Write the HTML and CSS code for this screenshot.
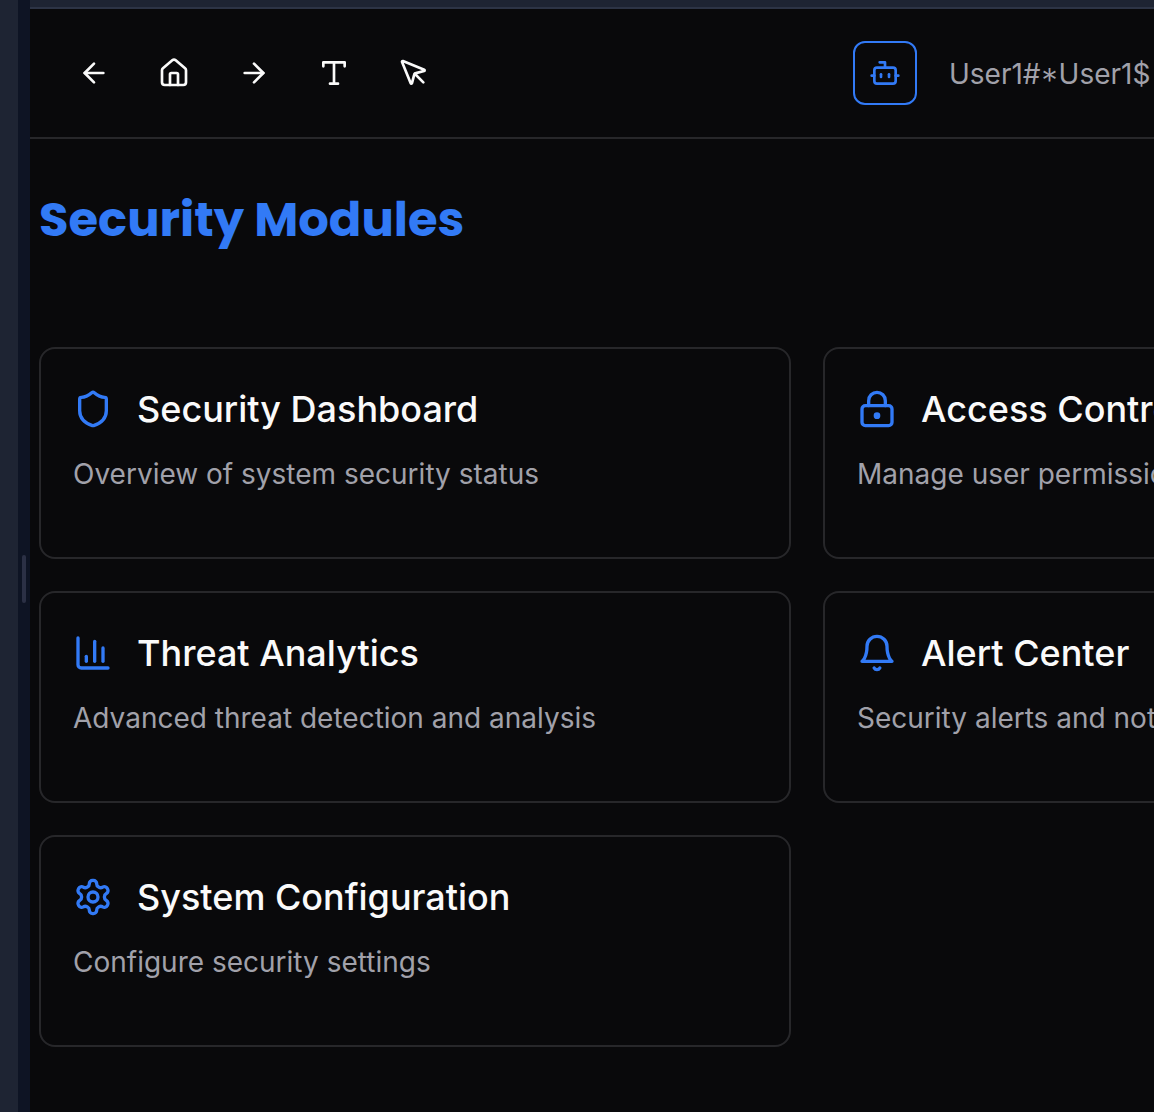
FILE: index.html
```html
<!DOCTYPE html>
<html lang="en">
<head>
<meta charset="utf-8">
<title>Security Modules</title>
<link rel="stylesheet" href="styles.css">
</head>
<body>
<div class="app">
  <aside class="sidebar"></aside>
  <div class="resizer"><span class="resizer-grip"></span></div>
  <div class="panel">
    <div class="panel-top"></div>
    <header class="toolbar">
      <nav class="tools">
        <svg class="icon" viewBox="0 0 24 24"><path d="m12 19-7-7 7-7"/><path d="M19 12H5"/></svg>
        <svg class="icon" viewBox="0 0 24 24"><path d="M15 21v-8a1 1 0 0 0-1-1h-4a1 1 0 0 0-1 1v8"/><path d="M3 10a2 2 0 0 1 .709-1.528l7-5.999a2 2 0 0 1 2.582 0l7 5.999A2 2 0 0 1 21 10v9a2 2 0 0 1-2 2H5a2 2 0 0 1-2-2z"/></svg>
        <svg class="icon" viewBox="0 0 24 24"><path d="M5 12h14"/><path d="m12 5 7 7-7 7"/></svg>
        <svg class="icon" viewBox="0 0 24 24"><path d="M4 7V4h16v3"/><path d="M9 20h6"/><path d="M12 4v16"/></svg>
        <svg class="icon" viewBox="0 0 24 24"><path d="M12.586 12.586 19 19"/><path d="M3.688 3.037a.497.497 0 0 0-.651.651l6.5 15.999a.501.501 0 0 0 .947-.062l1.569-6.083a2 2 0 0 1 1.448-1.479l6.124-1.579a.5.5 0 0 0 .063-.947z"/></svg>
      </nav>
      <div class="account">
        <button class="bot-button" aria-label="Assistant">
          <svg class="icon" viewBox="0 0 24 24"><path d="M12 8V4H8"/><rect width="16" height="12" x="4" y="8" rx="2"/><path d="M2 14h2"/><path d="M20 14h2"/><path d="M15 13v2"/><path d="M9 13v2"/></svg>
        </button>
        <span class="user">User1#<span class="star">*</span>User1$</span>
      </div>
    </header>
    <main class="content">
      <h1 class="heading">Security Modules</h1>
      <div class="cards">
        <section class="card">
          <div class="card-head">
            <svg class="icon card-icon" viewBox="0 0 24 24"><path d="M20 13c0 5-3.5 7.5-7.66 8.95a1 1 0 0 1-.67-.01C7.5 20.5 4 18 4 13V6a1 1 0 0 1 1-1c2 0 4.5-1.2 6.24-2.72a1.17 1.17 0 0 1 1.52 0C14.51 3.81 17 5 19 5a1 1 0 0 1 1 1z"/></svg>
            <h2 class="card-title">Security Dashboard</h2>
          </div>
          <p class="card-text">Overview of system security status</p>
        </section>
        <section class="card">
          <div class="card-head">
            <svg class="icon card-icon" viewBox="0 0 24 24"><circle cx="12" cy="16" r="1"/><rect x="3" y="10" width="18" height="12" rx="2"/><path d="M7 10V7a5 5 0 0 1 10 0v3"/></svg>
            <h2 class="card-title">Access Control</h2>
          </div>
          <p class="card-text">Manage user permissions</p>
        </section>
        <section class="card">
          <div class="card-head">
            <svg class="icon card-icon" viewBox="0 0 24 24"><path d="M3 3v16a2 2 0 0 0 2 2h16"/><path d="M18 17V9"/><path d="M13 17V5"/><path d="M8 17v-3"/></svg>
            <h2 class="card-title">Threat Analytics</h2>
          </div>
          <p class="card-text">Advanced threat detection and analysis</p>
        </section>
        <section class="card">
          <div class="card-head">
            <svg class="icon card-icon" viewBox="0 0 24 24"><path d="M6 8a6 6 0 0 1 12 0c0 7 3 9 3 9H3s3-2 3-9"/><path d="M10.3 21a1.94 1.94 0 0 0 3.4 0"/></svg>
            <h2 class="card-title">Alert Center</h2>
          </div>
          <p class="card-text">Security alerts and notifications</p>
        </section>
        <section class="card">
          <div class="card-head">
            <svg class="icon card-icon" viewBox="0 0 24 24"><path d="M12.22 2h-.44a2 2 0 0 0-2 2v.18a2 2 0 0 1-1 1.73l-.43.25a2 2 0 0 1-2 0l-.15-.08a2 2 0 0 0-2.73.73l-.22.38a2 2 0 0 0 .73 2.73l.15.1a2 2 0 0 1 1 1.72v.51a2 2 0 0 1-1 1.74l-.15.09a2 2 0 0 0-.73 2.73l.22.38a2 2 0 0 0 2.73.73l.15-.08a2 2 0 0 1 2 0l.43.25a2 2 0 0 1 1 1.73V20a2 2 0 0 0 2 2h.44a2 2 0 0 0 2-2v-.18a2 2 0 0 1 1-1.73l.43-.25a2 2 0 0 1 2 0l.15.08a2 2 0 0 0 2.73-.73l.22-.39a2 2 0 0 0-.73-2.73l-.15-.08a2 2 0 0 1-1-1.74v-.5a2 2 0 0 1 1-1.74l.15-.09a2 2 0 0 0 .73-2.73l-.22-.38a2 2 0 0 0-2.73-.73l-.15.08a2 2 0 0 1-2 0l-.43-.25a2 2 0 0 1-1-1.73V4a2 2 0 0 0-2-2z"/><circle cx="12" cy="12" r="3"/></svg>
            <h2 class="card-title">System Configuration</h2>
          </div>
          <p class="card-text">Configure security settings</p>
        </section>
      </div>
    </main>
  </div>
</div>
</body>
</html>
```
FILE: styles.css
```css
* {
  box-sizing: border-box;
}

body {
  margin: 0;
  overflow: hidden;
  background: #09090b;
  color: #fafafa;
  font-family: Inter, "Liberation Sans", sans-serif;
}

.app {
  display: flex;
  height: 1112px;
}

.sidebar {
  flex: none;
  width: 18px;
  background: #1e2433;
}

.resizer {
  flex: none;
  display: flex;
  justify-content: center;
  width: 12px;
  padding-top: 555px;
  background: #0e1424;
}

.resizer-grip {
  width: 4px;
  height: 48px;
  border-radius: 2px;
  background: #2b3045;
}

.panel {
  flex: 1;
  min-width: 0;
  overflow: hidden;
}

.panel-top {
  height: 9px;
  border-bottom: 2px solid #2d3446;
  background: #1e2433;
}

.toolbar {
  display: flex;
  align-items: center;
  height: 130px;
  padding-left: 48px;
  border-bottom: 2px solid #27272a;
}

.icon {
  display: block;
  flex: none;
  width: 32px;
  height: 32px;
  fill: none;
  stroke: currentColor;
  stroke-width: 2;
  stroke-linecap: round;
  stroke-linejoin: round;
}

.tools {
  display: flex;
  gap: 48px;
}

.account {
  display: flex;
  align-items: center;
  gap: 32px;
  margin-left: 423px;
}

.bot-button {
  display: flex;
  align-items: center;
  justify-content: center;
  width: 64px;
  height: 64px;
  padding: 0;
  border: 2px solid #327af6;
  border-radius: 12px;
  background: none;
  color: #327af6;
}

.user {
  padding-top: 2px;
  color: #a1a1aa;
  font-size: 28px;
  line-height: 40px;
  white-space: nowrap;
}

/* Larger asterisk, centred on the cap height */
.star {
  display: inline-block;
  width: 18px;
  font-size: 33px;
  font-weight: 300;
  line-height: 0;
  text-align: center;
  transform: translateY(8px);
}

.content {
  padding: 49px 0 0 9px;
}

.heading {
  margin: 0 0 95px;
  color: #327af6;
  font-family: Poppins, Inter, sans-serif;
  font-size: 48px;
  font-weight: 700;
  line-height: 64px;
  white-space: nowrap;
}

.cards {
  display: grid;
  grid-template-columns: repeat(2, 752px);
  grid-auto-rows: 212px;
  gap: 32px;
}

.card {
  padding: 32px;
  border: 2px solid #27272a;
  border-radius: 16px;
}

.card-head {
  display: flex;
  align-items: center;
  gap: 24px;
  height: 56px;
}

.card-icon {
  width: 40px;
  height: 40px;
  color: #327af6;
}

.card-title {
  margin: 0;
  font-size: 36px;
  font-weight: 500;
  line-height: 56px;
  white-space: nowrap;
}

.card-text {
  margin: 17px 0 0;
  color: #a1a1aa;
  font-size: 28px;
  line-height: 40px;
  white-space: nowrap;
}
```
